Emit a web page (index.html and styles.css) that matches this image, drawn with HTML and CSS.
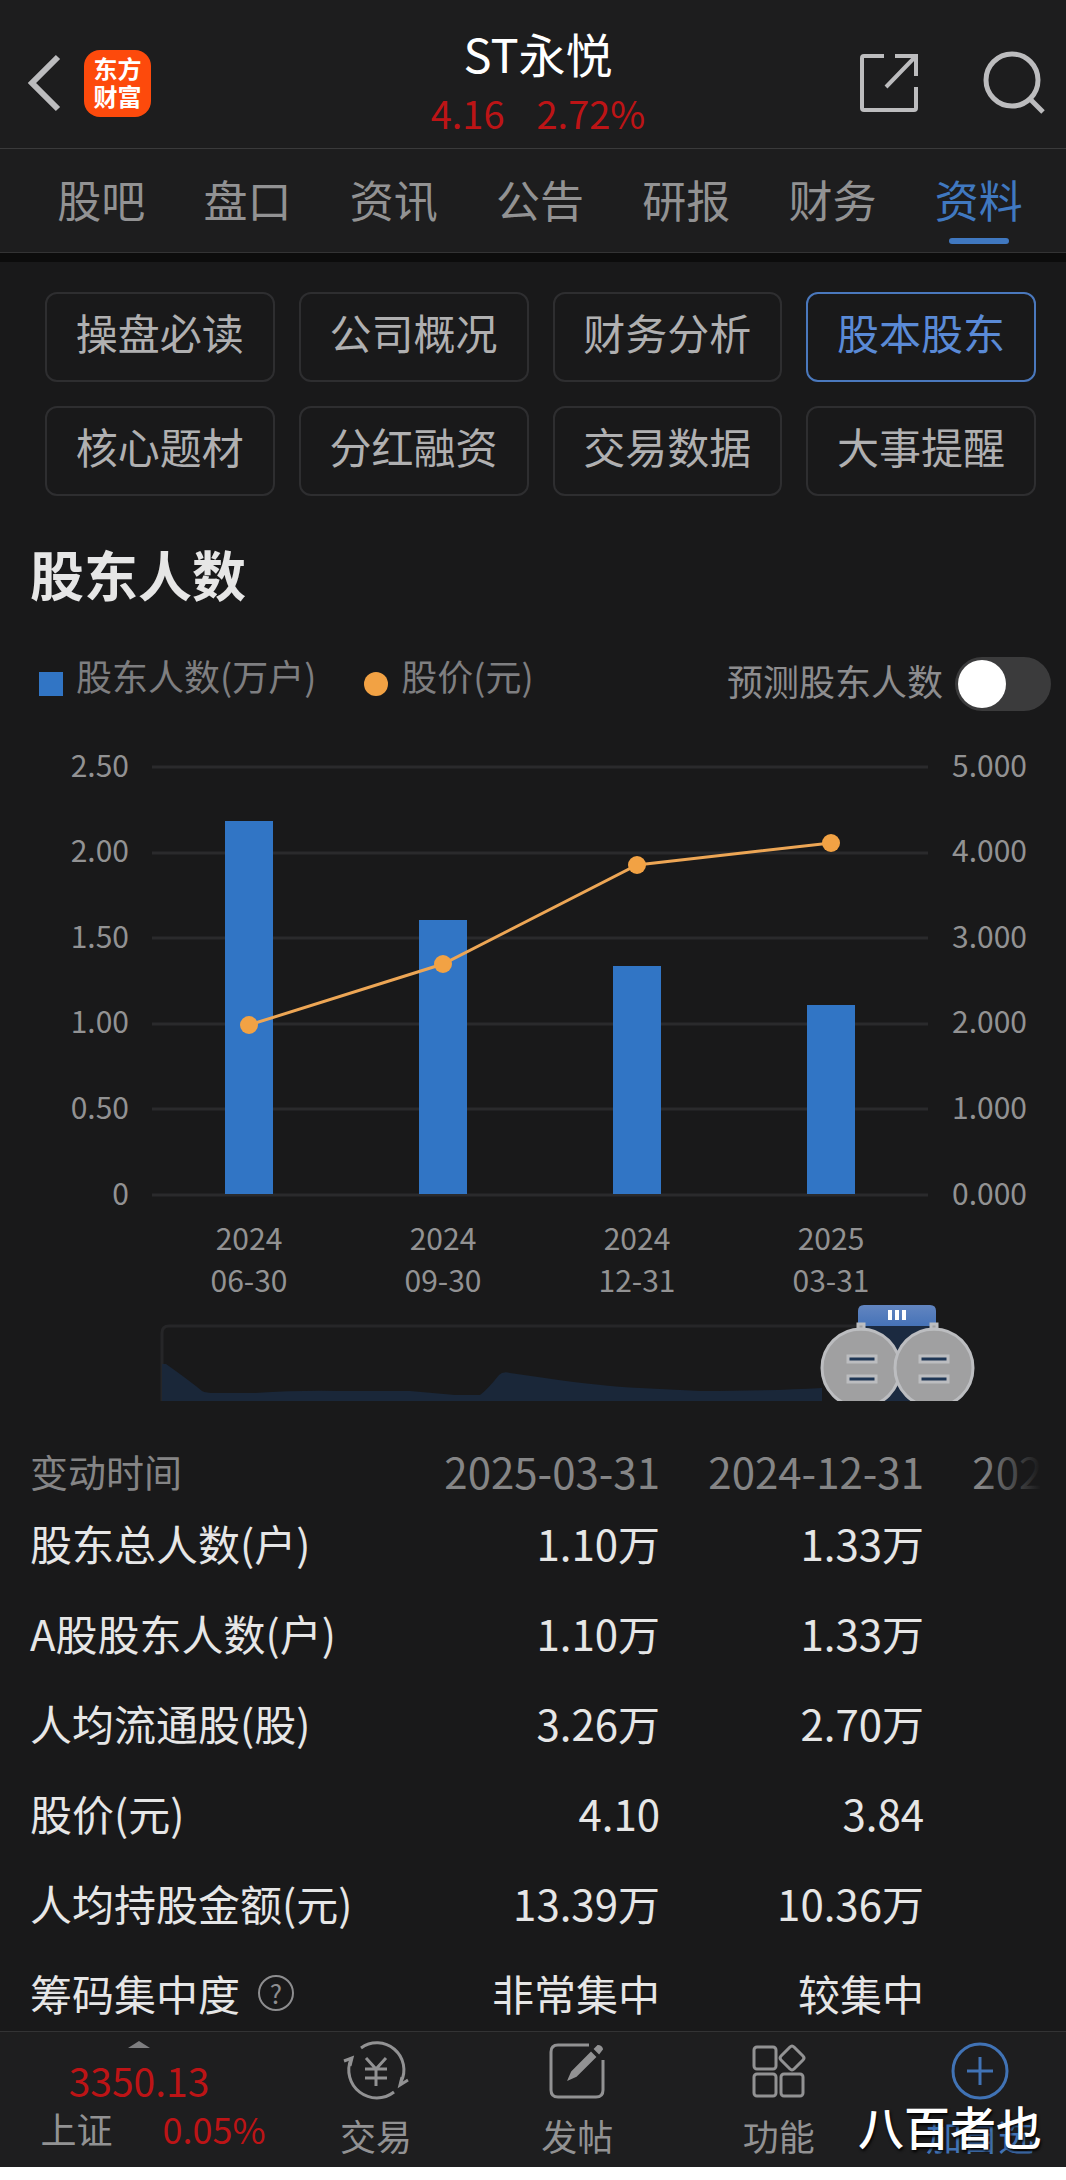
FILE: index.html
```html
<!DOCTYPE html>
<html lang="zh-CN">
<head>
    <meta charset="UTF-8">
    <meta name="viewport" content="width=device-width, initial-scale=1">
    <title>ST永悦 股本股东</title>
    <link rel="stylesheet" href="styles.css">
</head>
<body>
<div class="app">
    <header class="header">
        <div class="header-left">
            <button class="icon-btn" aria-label="返回">
                <svg width="34" height="56" viewBox="0 0 34 56"><path d="M30 2 L4 28 L30 54" fill="none" stroke="#bcbcbe" stroke-width="6"/></svg>
            </button>
            <div class="logo">东方<br>财富</div>
        </div>
        <div class="stock">
            <h1>ST永悦</h1>
            <p class="quote"><span>4.16</span><span>2.72%</span></p>
        </div>
        <div class="header-right">
            <button class="icon-btn" aria-label="分享">
                <svg width="58" height="60" viewBox="0 0 58 60"><path d="M24 3 H4 Q2 3 2 5 V55 Q2 57 4 57 H54 Q56 57 56 55 V34 M35 3 H56 V23 M56 3 L26 34" fill="none" stroke="#bcbcbe" stroke-width="4"/></svg>
            </button>
            <button class="icon-btn" aria-label="搜索">
                <svg width="66" height="66" viewBox="0 0 66 66"><circle cx="30" cy="30" r="26" fill="none" stroke="#bcbcbe" stroke-width="5"/><path d="M47 48 L61 62" stroke="#bcbcbe" stroke-width="5"/></svg>
            </button>
        </div>
    </header>

    <nav class="tabs">
        <a href="#">股吧</a>
        <a href="#">盘口</a>
        <a href="#">资讯</a>
        <a href="#">公告</a>
        <a href="#">研报</a>
        <a href="#">财务</a>
        <a href="#" class="active">资料</a>
    </nav>

    <main>
        <div class="pills">
            <button>操盘必读</button>
            <button>公司概况</button>
            <button>财务分析</button>
            <button class="active">股本股东</button>
            <button>核心题材</button>
            <button>分红融资</button>
            <button>交易数据</button>
            <button>大事提醒</button>
        </div>

        <h2>股东人数</h2>

        <div class="legend">
            <i class="mark square"></i><span class="name">股东人数(万户)</span>
            <i class="mark dot"></i><span class="name">股价(元)</span>
            <label for="forecast">预测股东人数</label>
            <input type="checkbox" id="forecast" class="switch">
        </div>

        <svg class="chart" viewBox="0 0 1066 690">
            <defs>
                <linearGradient id="grip" x1="0" y1="0" x2="0" y2="1">
                    <stop offset="0" stop-color="#6285c0"/>
                    <stop offset="1" stop-color="#4673b8"/>
                </linearGradient>
            </defs>
            <!-- grid -->
            <path d="M152 56H928 M152 142H928 M152 227H928 M152 313H928 M152 398H928 M152 484H928" stroke="#2a2a2c" stroke-width="3"/>
            <!-- left axis -->
            <g text-anchor="end">
                <text x="129" y="66">2.50</text>
                <text x="129" y="151">2.00</text>
                <text x="129" y="237">1.50</text>
                <text x="129" y="322">1.00</text>
                <text x="129" y="408">0.50</text>
                <text x="129" y="494">0</text>
            </g>
            <!-- right axis -->
            <g>
                <text x="952" y="66">5.000</text>
                <text x="952" y="151">4.000</text>
                <text x="952" y="237">3.000</text>
                <text x="952" y="322">2.000</text>
                <text x="952" y="408">1.000</text>
                <text x="952" y="494">0.000</text>
            </g>
            <!-- bars -->
            <g fill="#3175c5">
                <rect x="225" y="110" width="48" height="373"/>
                <rect x="419" y="209" width="48" height="274"/>
                <rect x="613" y="255" width="48" height="228"/>
                <rect x="807" y="294" width="48" height="189"/>
            </g>
            <polyline points="249,314 443,253 637,154 831,132" fill="none" stroke="#eda655" stroke-width="3"/>
            <g fill="#f2a244">
                <circle cx="249" cy="314" r="9"/>
                <circle cx="443" cy="253" r="9"/>
                <circle cx="637" cy="154" r="9"/>
                <circle cx="831" cy="132" r="9"/>
            </g>
            <!-- dates -->
            <g text-anchor="middle">
                <text x="249" y="539">2024</text><text x="249" y="581">06-30</text>
                <text x="443" y="539">2024</text><text x="443" y="581">09-30</text>
                <text x="637" y="539">2024</text><text x="637" y="581">12-31</text>
                <text x="831" y="539">2025</text><text x="831" y="581">03-31</text>
            </g>
            <!-- range slider -->
            <path d="M162 690 V622 Q162 615 169 615 H934" fill="none" stroke="#262628" stroke-width="3"/>
            <path d="M162 653 L166 653 Q190 670 202 680 Q206 682 215 682 L255 682 Q300 679 340 680 L410 680 L455 684 L480 684 Q488 678 499 664 Q503 660 510 662 L545 667 Q600 675 640 677 L700 680 Q770 680 822 677 L822 690 H162Z" fill="#1a2739"/>
            <rect x="861" y="615" width="73" height="75" fill="#1b2a40"/>
            <path d="M858 615 V600 Q858 594 864 594 H930 Q936 594 936 600 V615Z" fill="url(#grip)"/>
            <path d="M890 599V609 M897 599V609 M904 599V609" stroke="#fff" stroke-width="4"/>
            <g fill="#a0a0a1" stroke="#bcbdc0" stroke-width="3">
                <circle cx="861" cy="657" r="39"/>
                <rect x="858" y="613" width="6" height="5"/>
                <circle cx="934" cy="657" r="39"/>
                <rect x="931" y="613" width="6" height="5"/>
            </g>
            <g fill="#1e3655" stroke="#bcbdc0" stroke-width="3">
                <rect x="848" y="645" width="28" height="6"/>
                <rect x="848" y="665" width="28" height="6"/>
                <rect x="920" y="645" width="28" height="6"/>
                <rect x="920" y="665" width="28" height="6"/>
            </g>
        </svg>

        <div class="table-wrap">
            <table>
                <thead>
                    <tr><th>变动时间</th><th>2025-03-31</th><th>2024-12-31</th><th>2024-09-30</th></tr>
                </thead>
                <tbody>
                    <tr><th>股东总人数(户)</th><td>1.10万</td><td>1.33万</td><td></td></tr>
                    <tr><th>A股股东人数(户)</th><td>1.10万</td><td>1.33万</td><td></td></tr>
                    <tr><th>人均流通股(股)</th><td>3.26万</td><td>2.70万</td><td></td></tr>
                    <tr><th>股价(元)</th><td>4.10</td><td>3.84</td><td></td></tr>
                    <tr><th>人均持股金额(元)</th><td>13.39万</td><td>10.36万</td><td></td></tr>
                    <tr>
                        <th><span class="with-help">筹码集中度
                            <button class="help" aria-label="说明">?</button></span></th>
                        <td>非常集中</td><td>较集中</td><td></td>
                    </tr>
                </tbody>
            </table>
        </div>
    </main>

    <footer class="bottom">
        <a href="#" class="index">
            <i class="arrow"></i>
            <span class="point">3350.13</span>
            <span class="index-row"><span>上证</span><span class="red">0.05%</span></span>
        </a>
        <div class="actions">
            <a href="#">
                <svg width="68" height="60" viewBox="-34 -30 68 60" fill="none" stroke="#929293" stroke-width="3">
                    <path d="M-15 -23 A27 27 0 0 1 25 11 M18 21 A28 28 0 0 1 -25 -12"/>
                    <path d="M-32 -10 L-24 -13 L-26 -5 M32 9 L24 14 L26 6"/>
                    <path d="M-10 -13 L0 -2 L10 -13 M0 -2 V15 M-11 -2 H11 M-11 7 H11"/>
                </svg>
                <span>交易</span>
            </a>
            <a href="#">
                <svg width="60" height="60" viewBox="-30 -30 60 60" fill="none" stroke="#929293" stroke-width="3">
                    <path d="M12 -26 H-19 Q-26 -26 -26 -19 V19 Q-26 26 -19 26 H19 Q26 26 26 19 V-11"/>
                    <path d="M-8 8 L-5 1 L14 -18 L18 -14 L-1 5Z M18 -22 L21 -25 Q24 -25 25 -22 L22 -18Z" fill="#929293" stroke-width="2"/>
                </svg>
                <span>发帖</span>
            </a>
            <a href="#">
                <svg width="60" height="60" viewBox="-30 -30 60 60" fill="none" stroke="#929293" stroke-width="3">
                    <rect x="-25" y="-24" width="22" height="22" rx="3"/>
                    <rect x="-25" y="3" width="22" height="22" rx="3"/>
                    <rect x="2" y="3" width="22" height="22" rx="3"/>
                    <path d="M11 -24 Q13 -26 15 -24 L24 -15 Q26 -13 24 -11 L15 -2 Q13 0 11 -2 L2 -11 Q0 -13 2 -15Z"/>
                </svg>
                <span>功能</span>
            </a>
            <a href="#" class="add">
                <svg width="60" height="60" viewBox="-30 -30 60 60" fill="none" stroke="#4173b5" stroke-width="3">
                    <circle r="27"/>
                    <path d="M-13 0 H13 M0 -14 V14"/>
                </svg>
                <span>加自选</span>
            </a>
        </div>
        <span class="mark-text">八百者也</span>
    </footer>
</div>
</body>
</html>
```
FILE: styles.css
```css
*{
    margin: 0;
    padding: 0;
    box-sizing: border-box;
}
body{
    background: #fff;
    font-family: "Noto Sans CJK SC", "Noto Sans", sans-serif;
}
button{
    font-family: inherit;
    background: none;
    border: 0;
    cursor: pointer;
}
a{
    color: inherit;
    text-decoration: none;
}
svg{
    display: block;
    overflow: visible;
}
.app{
    background: #19191a;
    color: #e6e6e6;
    overflow: hidden;
}

/* header */
.header{
    display: grid;
    grid-template-columns: 1fr auto 1fr;
    align-items: center;
    height: 149px;
    padding: 18px 18px 0 28px;
    background: #1d1d1e;
    border-bottom: 1px solid #3a3a3b;
}
.header-left, .header-right{
    display: flex;
    align-items: center;
}
.header-left{
    gap: 22px;
}
.header-right{
    justify-content: flex-end;
    gap: 64px;
}
.logo{
    width: 67px;
    height: 67px;
    padding-top: 4px;
    border-radius: 16px;
    background: #fd4a0c;
    color: #fff;
    font-size: 24px;
    font-weight: 700;
    line-height: 28px;
    text-align: center;
}
.stock{
    text-align: center;
}
.stock h1{
    color: #fff;
    font-size: 47px;
    font-weight: 400;
    line-height: 60px;
}
.quote{
    display: flex;
    justify-content: center;
    gap: 32px;
    color: #bd1416;
    font-size: 38px;
    line-height: 60px;
}

/* tabs */
.tabs{
    display: grid;
    grid-template-columns: repeat(7, 1fr);
    height: 104px;
    padding: 0 14px 0 28px;
    background: #1d1d1e;
    border-bottom: 1px solid #333334;
    color: #929293;
    font-size: 44px;
    line-height: 60px;
    text-align: center;
}
.tabs a{
    position: relative;
    padding-top: 20px;
}
.tabs .active{
    color: #4078c0;
}
.tabs .active::after{
    content: "";
    position: absolute;
    left: 50%;
    bottom: 8px;
    width: 60px;
    height: 6px;
    margin-left: -30px;
    border-radius: 3px;
    background: #4078c0;
}
main{
    border-top: 9px solid #0c0c0c;
}

/* section buttons */
.pills{
    display: grid;
    grid-template-columns: repeat(4, 1fr);
    gap: 24px;
    padding: 30px 30px 0 45px;
}
.pills button{
    height: 90px;
    padding-bottom: 10px;
    border: 2px solid #2e2e30;
    border-radius: 12px;
    color: #b0b0b1;
    font-size: 42px;
    line-height: 60px;
}
.pills .active{
    border-color: #4a78bd;
    color: #5a8ad6;
}
h2{
    margin-top: 46px;
    padding-left: 30px;
    font-size: 54px;
    font-weight: 700;
    line-height: 64px;
}

/* legend */
.legend{
    display: flex;
    align-items: center;
    margin-top: 51px;
    padding: 0 15px 0 39px;
    color: #7e7e80;
    font-size: 36px;
    line-height: 36px;
}
.mark{
    width: 24px;
    height: 24px;
    margin-right: 13px;
}
.square{
    background: #3175c5;
}
.dot{
    border-radius: 50%;
    background: #f2a244;
}
.name{
    margin-right: 48px;
    padding-bottom: 18px;
}
.legend label{
    margin: 0 12px 0 auto;
    padding-bottom: 8px;
    color: #8d8d8f;
}
.switch{
    appearance: none;
    width: 96px;
    height: 54px;
    padding: 3px;
    border-radius: 27px;
    background: #3b3b3c;
    cursor: pointer;
}
.switch::before{
    content: "";
    display: block;
    width: 48px;
    height: 48px;
    border-radius: 50%;
    background: #fff;
}
.switch:checked{
    background: #3175c5;
}
.switch:checked::before{
    margin-left: auto;
}

.chart{
    width: 100%;
    height: auto;
    overflow: hidden;
    font-size: 30px;
    fill: #929293;
}

/* table */
.table-wrap{
    position: relative;
    margin-top: 33px;
    padding: 10px 0 0 30px;
    overflow: hidden;
}
.table-wrap::after{
    content: "";
    position: absolute;
    top: 0;
    right: 0;
    width: 84px;
    height: 100%;
    background: linear-gradient(to right, transparent, #19191a 70%);
}
table{
    width: 1158px;
    table-layout: fixed;
    border-collapse: collapse;
    font-size: 42px;
    line-height: 60px;
}
th{
    font-weight: 400;
    text-align: left;
    white-space: nowrap;
}
thead th{
    width: 264px;
    color: #858586;
    line-height: 54px;
    text-align: right;
}
thead th:first-child{
    width: auto;
    font-size: 38px;
    text-align: left;
}
tbody th, td{
    padding: 15px 0;
}
td{
    text-align: right;
}
tbody tr:last-child > *{
    padding-bottom: 8px;
}
.with-help{
    display: flex;
    align-items: center;
    gap: 18px;
}
.help{
    width: 36px;
    height: 36px;
    border: 2px solid #8d8d8f;
    border-radius: 50%;
    color: #8d8d8f;
    font-size: 26px;
    line-height: 30px;
}

/* bottom bar */
.bottom{
    position: relative;
    display: flex;
    background: #1e1e1f;
    border-top: 1px solid #333334;
    color: #929293;
    font-size: 36px;
    line-height: 44px;
}
.index{
    display: flex;
    flex-direction: column;
    align-items: center;
    width: 278px;
    padding-top: 9px;
}
.arrow{
    margin-bottom: 10px;
    border: 11px solid transparent;
    border-top: 0;
    border-bottom: 7px solid #7e7e80;
}
.point{
    margin-bottom: 4px;
    color: #bd1416;
    font-size: 39px;
}
.index-row{
    display: flex;
    gap: 50px;
    padding-left: 28px;
}
.red{
    color: #bd1416;
}
.actions{
    display: flex;
    flex: 1;
    justify-content: space-between;
    padding: 9px 16px 10px 28px;
}
.actions a{
    display: flex;
    flex-direction: column;
    align-items: center;
    gap: 12px;
    width: 140px;
}
.actions .add{
    color: #4173b5;
}
.mark-text{
    position: absolute;
    right: 24px;
    bottom: 15px;
    color: #fff;
    font-size: 46px;
    font-weight: 500;
    line-height: 54px;
    text-shadow: 1px 2px 3px #000;
}
```
